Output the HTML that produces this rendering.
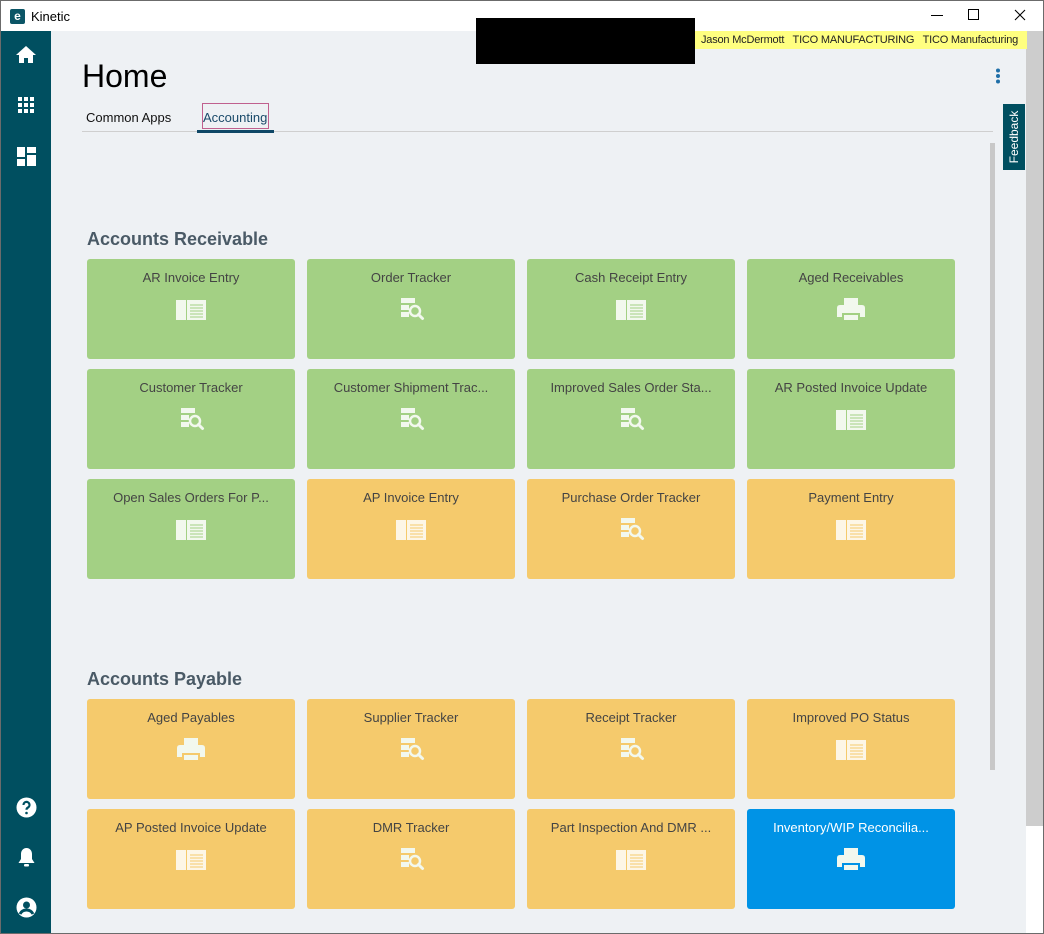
<!DOCTYPE html>
<html><head><meta charset="utf-8"><style>
*{margin:0;padding:0;box-sizing:border-box}
body{width:1044px;height:934px;overflow:hidden;font-family:"Liberation Sans",sans-serif;background:#fff;position:relative}
.frame{position:absolute;left:0;top:0;width:1044px;height:934px;border:1px solid #6b6b6b}
.title{position:absolute;left:1px;top:1px;width:1042px;height:30px;background:#fff}
.logo{position:absolute;left:9px;top:8px;width:15px;height:15px;background:#0b5566;border-radius:2px;color:#fff;font-size:12px;font-weight:bold;line-height:14px;text-align:center}
.ttext{position:absolute;left:30px;top:8px;font-size:13px;color:#000}
.side{position:absolute;left:1px;top:31px;width:50px;height:902px;background:#004f60}
.main{position:absolute;left:51px;top:31px;width:975px;height:902px;background:#eef1f4}
.vscroll{position:absolute;left:1026px;top:31px;width:17px;height:795px;background:#cdcdcd}
.black{position:absolute;left:476px;top:18px;width:219px;height:46px;background:#000}
.yel{position:absolute;left:695px;top:31px;width:332px;height:18px;background:#ffff80;font-size:11px;color:#222;line-height:18px;padding-left:6px;white-space:nowrap;overflow:hidden;letter-spacing:-0.2px}
h1{position:absolute;left:82px;top:58px;font-weight:normal;font-size:32px;color:#000}
.tab{position:absolute;top:110px;font-size:13px;color:#111}
.tabline{position:absolute;left:82px;top:131px;width:911px;height:1px;background:#cfcfcf}
.sec{position:absolute;left:87px;font-size:18px;font-weight:bold;color:#4a5a66}
.t{position:absolute;width:208px;height:100px;border-radius:3px;text-align:center;font-size:13px;color:#444;padding-top:11px}
.g{background:#a3d084}.o{background:#f5ca6c}.b{background:#0093e6;color:#fff}
.t svg{position:absolute;left:89px;top:36px}
</style></head><body>
<div class="frame"></div>
<div class="title"><div class="logo">e</div><div class="ttext">Kinetic</div>
<svg style="position:absolute;left:930px;top:14px" width="12" height="2"><rect width="12" height="1" fill="#000"/></svg>
<svg style="position:absolute;left:967px;top:8px" width="12" height="12"><rect x=".5" y=".5" width="10" height="10" fill="none" stroke="#000"/></svg>
<svg style="position:absolute;left:1013px;top:8px" width="12" height="12"><path d="M1 1L11 11M11 1L1 11" stroke="#000" stroke-width="1.1"/></svg>
</div>
<div class="side">
<svg style="position:absolute;left:15px;top:15px" width="20" height="18" viewBox="0 0 20 18"><path d="M10 0L0 9h3v8h5v-5h4v5h5V9h3z" fill="#fff"/></svg>
<svg style="position:absolute;left:17px;top:66px" width="17" height="17"><g fill="#fff"><rect x="0" y="0" width="4" height="4"/><rect x="6" y="0" width="4" height="4"/><rect x="12" y="0" width="4" height="4"/><rect x="0" y="6" width="4" height="4"/><rect x="6" y="6" width="4" height="4"/><rect x="12" y="6" width="4" height="4"/><rect x="0" y="12" width="4" height="4"/><rect x="6" y="12" width="4" height="4"/><rect x="12" y="12" width="4" height="4"/></g></svg>
<svg style="position:absolute;left:16px;top:116px" width="19" height="19"><g fill="#fff"><rect x="0" y="0" width="8" height="10"/><rect x="10" y="0" width="9" height="6"/><rect x="0" y="12" width="8" height="7"/><rect x="10" y="8" width="9" height="11"/></g></svg>
<svg style="position:absolute;left:15px;top:766px" width="21" height="21" viewBox="0 0 21 21"><circle cx="10.5" cy="10.5" r="10" fill="#fff"/><path d="M7.5 8a3 3 0 1 1 4.5 2.5c-1 .6-1.5 1-1.5 2.3" stroke="#004f60" stroke-width="2.2" fill="none"/><circle cx="10.5" cy="16" r="1.3" fill="#004f60"/></svg>
<svg style="position:absolute;left:16px;top:816px" width="19" height="21" viewBox="0 0 19 21"><path d="M9.5 1c-3.5 0-5.5 3-5.5 6v5l-2.5 4h16l-2.5-4V7c0-3-2-6-5.5-6z" fill="#fff"/><rect x="7" y="17" width="5" height="2.5" rx="1" fill="#fff"/></svg>
<svg style="position:absolute;left:15px;top:866px" width="21" height="21" viewBox="0 0 21 21"><circle cx="10.5" cy="10.5" r="10" fill="#fff"/><circle cx="10.5" cy="8" r="3.5" fill="#004f60"/><path d="M4 17c1.5-3 4-4 6.5-4s5 1 6.5 4" stroke="#004f60" stroke-width="3" fill="none"/></svg>
</div>
<div class="main"></div>
<div class="vscroll"></div>
<div style="position:absolute;left:990px;top:143px;width:5px;height:627px;background:#c8c8c8"></div>
<div class="black"></div>
<div class="yel">Jason McDermott &nbsp; TICO MANUFACTURING &nbsp; TICO Manufacturing</div>
<svg style="position:absolute;left:995px;top:68px" width="6" height="16"><g fill="#1f6fa8"><circle cx="3" cy="2.5" r="2"/><circle cx="3" cy="8" r="2"/><circle cx="3" cy="13.5" r="2"/></g></svg>
<div style="position:absolute;left:1003px;top:104px;width:22px;height:66px;background:#004f60;"><div style="position:absolute;left:-22px;top:22px;width:66px;height:22px;transform:rotate(-90deg);color:#fff;font-size:12px;line-height:22px;text-align:center">Feedback</div></div>
<h1>Home</h1>
<div class="tab" style="left:86px">Common Apps</div>
<div style="position:absolute;left:202px;top:103px;width:67px;height:26px;border:1px solid #c0608e"></div>
<div class="tab" style="left:203px;color:#1a4a6a">Accounting</div>
<div class="tabline"></div>
<div style="position:absolute;left:197px;top:130px;width:77px;height:3px;background:#0e4766"></div>
<div class="sec" style="top:229px">Accounts Receivable</div>
<div class="sec" style="top:669px">Accounts Payable</div>

<svg width="0" height="0" style="position:absolute"><defs>
<symbol id="e" viewBox="0 0 30 30"><g fill="#f2f8ee"><rect x="0" y="5" width="10" height="20"/><rect x="11" y="5" width="19" height="20"/></g><g stroke="#a3d084" stroke-width="1"><path d="M14 10h13M14 13h13M14 16h13M14 19h13M14 22h13"/></g></symbol>
<symbol id="eo" viewBox="0 0 30 30"><g fill="#fdf6e6"><rect x="0" y="5" width="10" height="20"/><rect x="11" y="5" width="19" height="20"/></g><g stroke="#f5ca6c" stroke-width="1"><path d="M14 10h13M14 13h13M14 16h13M14 19h13M14 22h13"/></g></symbol>
<symbol id="k" viewBox="0 0 30 30"><g fill="#f2f8ee"><rect x="5" y="3" width="14" height="5"/><rect x="5" y="10" width="8" height="5"/><rect x="5" y="17" width="8" height="5"/></g><circle cx="19" cy="16" r="5" fill="none" stroke="#f2f8ee" stroke-width="2.5"/><path d="M22.5 19.5l4 4" stroke="#f2f8ee" stroke-width="3" stroke-linecap="round"/></symbol>
<symbol id="p" viewBox="0 0 30 30"><g fill="#f2f8ee"><rect x="8" y="3" width="14" height="9"/><path d="M1 13q0-3 3-3h22q3 0 3 3v9h-5v-4H6v4H1z"/><rect x="8" y="20" width="14" height="5"/></g></symbol>
</defs></svg>

<div class="t g" style="left:87px;top:259px">AR Invoice Entry<svg width="30" height="30"><use href="#e"/></svg></div>
<div class="t g" style="left:307px;top:259px">Order Tracker<svg width="30" height="30"><use href="#k"/></svg></div>
<div class="t g" style="left:527px;top:259px">Cash Receipt Entry<svg width="30" height="30"><use href="#e"/></svg></div>
<div class="t g" style="left:747px;top:259px">Aged Receivables<svg width="30" height="30"><use href="#p"/></svg></div>
<div class="t g" style="left:87px;top:369px">Customer Tracker<svg width="30" height="30"><use href="#k"/></svg></div>
<div class="t g" style="left:307px;top:369px">Customer Shipment Trac...<svg width="30" height="30"><use href="#k"/></svg></div>
<div class="t g" style="left:527px;top:369px">Improved Sales Order Sta...<svg width="30" height="30"><use href="#k"/></svg></div>
<div class="t g" style="left:747px;top:369px">AR Posted Invoice Update<svg width="30" height="30"><use href="#e"/></svg></div>
<div class="t g" style="left:87px;top:479px">Open Sales Orders For P...<svg width="30" height="30"><use href="#e"/></svg></div>
<div class="t o" style="left:307px;top:479px">AP Invoice Entry<svg width="30" height="30"><use href="#eo"/></svg></div>
<div class="t o" style="left:527px;top:479px">Purchase Order Tracker<svg width="30" height="30"><use href="#k"/></svg></div>
<div class="t o" style="left:747px;top:479px">Payment Entry<svg width="30" height="30"><use href="#eo"/></svg></div>

<div class="t o" style="left:87px;top:699px">Aged Payables<svg width="30" height="30"><use href="#p"/></svg></div>
<div class="t o" style="left:307px;top:699px">Supplier Tracker<svg width="30" height="30"><use href="#k"/></svg></div>
<div class="t o" style="left:527px;top:699px">Receipt Tracker<svg width="30" height="30"><use href="#k"/></svg></div>
<div class="t o" style="left:747px;top:699px">Improved PO Status<svg width="30" height="30"><use href="#eo"/></svg></div>
<div class="t o" style="left:87px;top:809px">AP Posted Invoice Update<svg width="30" height="30"><use href="#eo"/></svg></div>
<div class="t o" style="left:307px;top:809px">DMR Tracker<svg width="30" height="30"><use href="#k"/></svg></div>
<div class="t o" style="left:527px;top:809px">Part Inspection And DMR ...<svg width="30" height="30"><use href="#eo"/></svg></div>
<div class="t b" style="left:747px;top:809px">Inventory/WIP Reconcilia...<svg width="30" height="30"><use href="#p"/></svg></div>
</body></html>
